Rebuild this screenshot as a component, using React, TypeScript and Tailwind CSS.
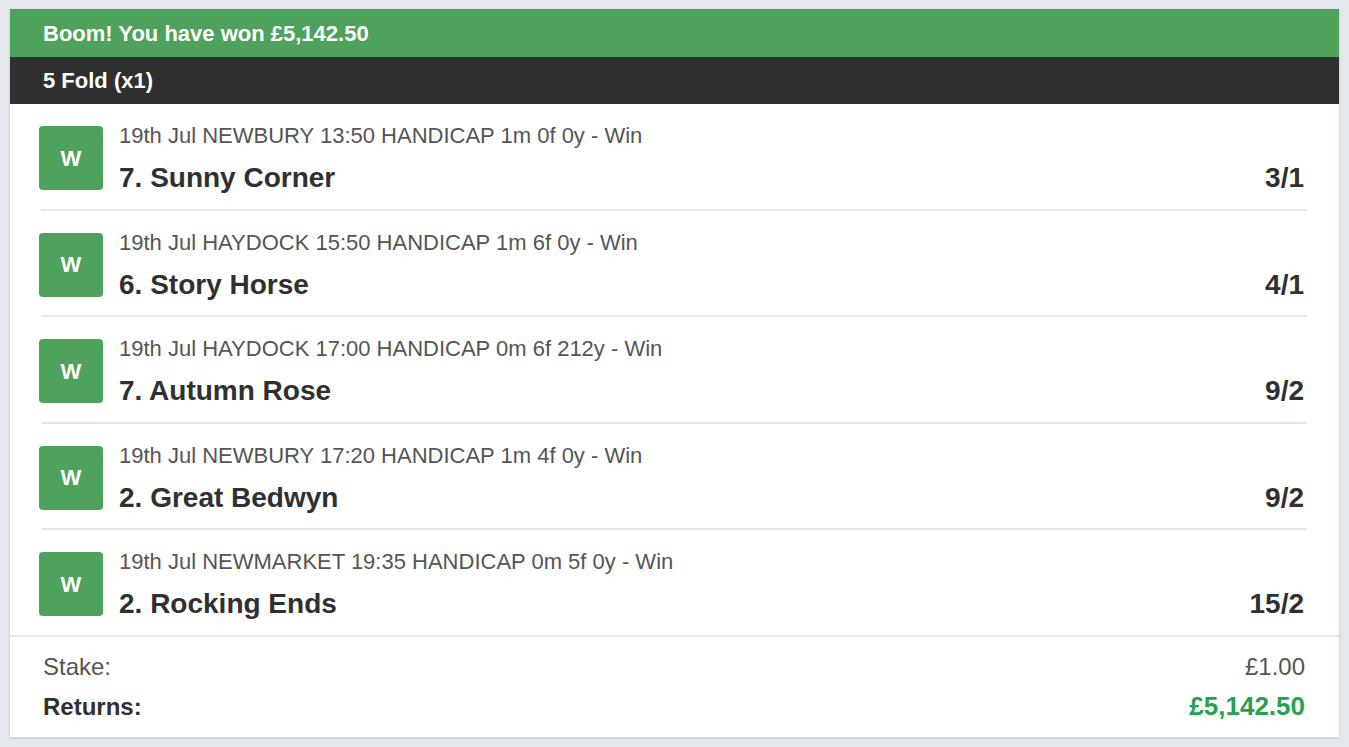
const legs = [
  { meta: '19th Jul NEWBURY 13:50 HANDICAP 1m 0f 0y - Win', name: '7. Sunny Corner', odds: '3/1' },
  { meta: '19th Jul HAYDOCK 15:50 HANDICAP 1m 6f 0y - Win', name: '6. Story Horse', odds: '4/1' },
  { meta: '19th Jul HAYDOCK 17:00 HANDICAP 0m 6f 212y - Win', name: '7. Autumn Rose', odds: '9/2' },
  { meta: '19th Jul NEWBURY 17:20 HANDICAP 1m 4f 0y - Win', name: '2. Great Bedwyn', odds: '9/2' },
  { meta: '19th Jul NEWMARKET 19:35 HANDICAP 0m 5f 0y - Win', name: '2. Rocking Ends', odds: '15/2' },
];

export default function App() {
  return (
    <div className="min-h-[747px] bg-[#e4e7eb] px-[10px] pt-[9px] pb-[10px] font-['Liberation_Sans',Arial,sans-serif]">
      <div className="bg-white shadow-[0_1px_3px_rgba(0,0,0,0.15)]">
        <div className="h-[48px] flex items-center px-[33px] bg-[#4ea25b] text-white font-bold text-[22px]">
          Boom! You have won £5,142.50
        </div>
        <div className="h-[47px] flex items-center px-[33px] bg-[#2f2f2f] text-white font-bold text-[22px]">
          5 Fold (x1)
        </div>

        <div className="px-[29px]">
          {legs.map((leg, i) => {
            const last = i === legs.length - 1;
            return (
              <div key={i}>
                <div className={'flex items-start gap-4 pt-[22px] ' + (last ? 'pb-[19px]' : 'pb-[18.5px]')}>
                  <div className="w-[64px] h-[64px] shrink-0 rounded-[4px] bg-[#4ea25b] flex items-center justify-center text-white font-bold text-[22px]">
                    W
                  </div>
                  <div className="flex-1 min-w-0 h-[64px] pr-[6px]">
                    <div className="text-[22px] leading-[24px] text-[#555] -mt-[2px]">{leg.meta}</div>
                    <div className="flex justify-between items-baseline mt-[14px]">
                      <div className="text-[28px] leading-[32px] font-bold text-[#303030]">{leg.name}</div>
                      <div className="text-[28px] leading-[32px] font-bold text-[#303030]">{leg.odds}</div>
                    </div>
                  </div>
                </div>
                {!last && <div className="ml-[2px] mr-[3px] h-[2px] bg-[#e3e6ea]" />}
              </div>
            );
          })}
        </div>

        <div className="border-t-2 border-[#e3e6ea] pl-[33px] pr-[34px] pt-[16px] pb-[15px]">
          <div className="flex justify-between items-baseline text-[24px] leading-[28px] text-[#555]">
            <span>Stake:</span>
            <span>£1.00</span>
          </div>
          <div className="flex justify-between items-baseline mt-[10px]">
            <span className="text-[24px] leading-[30px] font-bold text-[#303030]">Returns:</span>
            <span className="text-[26px] leading-[30px] font-bold text-[#28a14f]">£5,142.50</span>
          </div>
        </div>
      </div>
    </div>
  );
}
